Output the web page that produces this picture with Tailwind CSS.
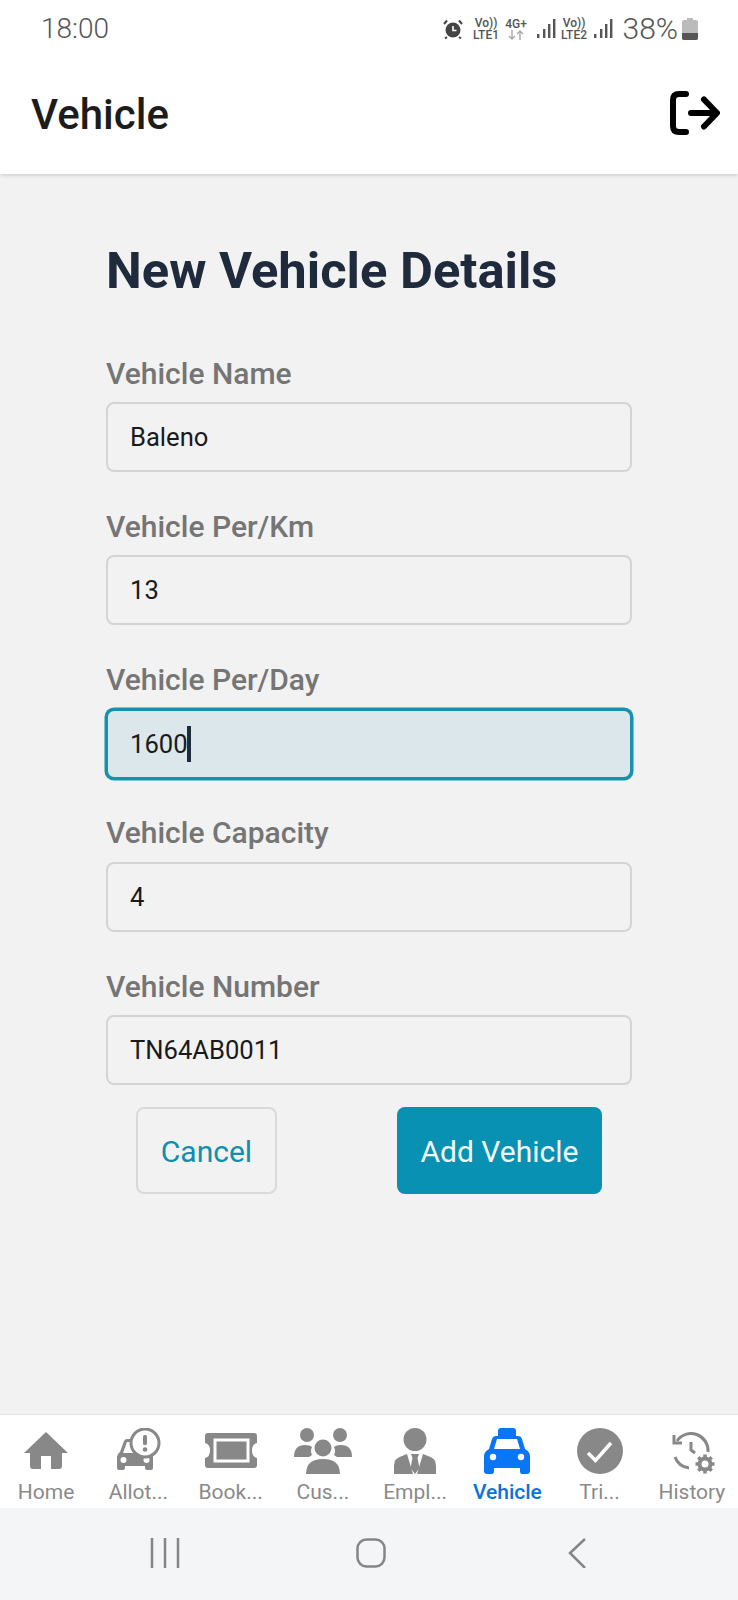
<!DOCTYPE html>
<html lang="en">

<head>
    <meta charset="UTF-8">
    <meta name="viewport" content="width=device-width, initial-scale=1.0">
    <title>Vehicle</title>
    <script src="https://cdn.jsdelivr.net/npm/@tailwindcss/browser@4"></script>
</head>

<body class="bg-[#f2f2f2] font-['Roboto',sans-serif]">
    <div class="flex flex-col h-[1600px] w-[738px] overflow-hidden">
        <!-- Status bar + title -->
        <header class="bg-white h-[174px] shrink-0 shadow-[0_1px_4px_rgba(0,0,0,0.18)] relative z-10">
            <div class="h-[57px] flex items-center justify-between pl-[41px] pr-[40px] text-[#555]">
                <span class="text-[28px] font-light">18:00</span>
                <div class="flex items-center">
                    <svg class="w-[20px] h-[20px]" viewBox="0 0 20 20" fill="#444">
                        <circle cx="10" cy="11" r="7.5" />
                        <path d="M1 5 4 1.5M19 5 16 1.5M4 18l-2 1.5M16 18l2 1.5" stroke="#444" stroke-width="2" />
                        <path d="M10 7v4.5h3.5" stroke="#fff" stroke-width="1.6" fill="none" />
                    </svg>
                    <div class="ml-[10px] w-[27px] flex flex-col items-center text-[12px] leading-[12px] font-medium">
                        <span>Vo))</span><span>LTE1</span>
                    </div>
                    <div class="ml-[5px] w-[23px] flex flex-col items-center text-[12px] leading-[12px] font-medium">
                        <span>4G+</span>
                        <svg class="w-[16px] h-[10px]" viewBox="0 0 16 10" fill="none" stroke="#aaa" stroke-width="1.4">
                            <path d="M4 0v9M1 6l3 3 3-3M12 10V1M9 4l3-3 3 3" />
                        </svg>
                    </div>
                    <svg class="ml-[9px] w-[19px] h-[20px]" viewBox="0 0 19 20" fill="#555">
                        <rect x="0" y="15" width="2.4" height="4" /><rect x="6" y="10" width="2.4" height="9" /><rect x="11" y="5" width="2.4" height="14" /><rect x="16" y="0" width="2.4" height="19" />
                    </svg>
                    <div class="ml-[5px] w-[27px] flex flex-col items-center text-[12px] leading-[12px] font-medium">
                        <span>Vo))</span><span>LTE2</span>
                    </div>
                    <svg class="ml-[6px] w-[19px] h-[20px]" viewBox="0 0 19 20" fill="#555">
                        <rect x="0" y="15" width="2.4" height="4" /><rect x="6" y="10" width="2.4" height="9" /><rect x="11" y="5" width="2.4" height="14" /><rect x="16" y="0" width="2.4" height="19" />
                    </svg>
                    <span class="ml-[10px] text-[30px] font-light">38%</span>
                    <svg class="ml-[4px] w-[16px] h-[22px]" viewBox="0 0 16 22">
                        <path d="M5 0h6v2h3q2 0 2 2v16q0 2-2 2H2q-2 0-2-2V4q0-2 2-2h3z" fill="#bbb" />
                        <path d="M0 15h16v5q0 2-2 2H2q-2 0-2-2z" fill="#555" />
                    </svg>
                </div>
            </div>
            <div class="flex items-center justify-between pl-[31px] pr-[18px] h-[112px]">
                <h2 class="text-[42px] font-medium text-[#1c1c1c] pt-[2px]">Vehicle</h2>
                <svg class="w-[50px] h-[44px]" viewBox="0 0 50 44" fill="none" stroke="#000" stroke-width="6" stroke-linecap="round" stroke-linejoin="round">
                    <path d="M16 3H9Q3 3 3 9v26q0 6 6 6h7" />
                    <path d="M21 22h25M34 8.500 47 22 34 35.500" />
                </svg>
            </div>
        </header>

        <!-- Form -->
        <main class="flex-1 px-[106px] pt-[65px]">
            <h1 class="text-[50.700px] leading-[64px] font-bold text-[#1f2a3c] mb-[54.500px]">New Vehicle Details</h1>

            <label class="block text-[30px] leading-[32px] font-medium text-[#757575] mb-[12.500px]">Vehicle Name</label>
            <input class="block w-[526px] h-[70px] px-[22px] rounded-lg border-2 border-[#d4d4d4] text-[25.600px] text-[#1a1a1a] mb-[38.800px]" value="Baleno">

            <label class="block text-[30px] leading-[32px] font-medium text-[#757575] mb-[12.500px]">Vehicle Per/Km</label>
            <input class="block w-[526px] h-[70px] px-[22px] rounded-lg border-2 border-[#d4d4d4] text-[25.600px] text-[#1a1a1a] mb-[38.800px]" value="13">

            <label class="block text-[30px] leading-[32px] font-medium text-[#757575] mb-[12.500px]">Vehicle Per/Day</label>
            <div class="relative mb-[38.800px]">
                <input class="block w-[526px] h-[70px] px-[22px] rounded-lg border-2 border-[#1592b0] ring-[1.500px] ring-[#1592b0] bg-[#dbe7ea] text-[25.600px] text-[#1a1a1a]" value="1600">
                <span class="absolute left-[81px] top-[17px] w-[4px] h-[36px] bg-[#1f2a3c]"></span>
            </div>

            <label class="block text-[30px] leading-[32px] font-medium text-[#757575] mb-[12.500px]">Vehicle Capacity</label>
            <input class="block w-[526px] h-[70px] px-[22px] rounded-lg border-2 border-[#d4d4d4] text-[25.600px] text-[#1a1a1a] mb-[38.800px]" value="4">

            <label class="block text-[30px] leading-[32px] font-medium text-[#757575] mb-[12.500px]">Vehicle Number</label>
            <input class="block w-[526px] h-[70px] px-[22px] rounded-lg border-2 border-[#d4d4d4] text-[25.600px] text-[#1a1a1a]" value="TN64AB0011">

            <div class="flex justify-between px-[30px] mt-[22px]">
                <button class="w-[141px] h-[87px] rounded-lg border-2 border-[#d9d9d9] text-[#0e8fae] text-[30px] pt-[1px]">Cancel</button>
                <button class="w-[205px] h-[87px] rounded-lg bg-[#0891b2] text-[#f2f9fb] text-[30px] pt-[1px]">Add Vehicle</button>
            </div>
        </main>

        <!-- Tabs -->
        <nav class="bg-white h-[94px] shrink-0 grid grid-cols-8 pt-[13px] border-t border-[#e4e4e4] text-[21px] text-[#8a8a8a] text-center">
            <a class="flex flex-col items-center">
                <svg class="w-[60px] h-[46px]" viewBox="0 0 60 46" fill="#888">
                    <path d="M30 4 8 25h6v13q0 3 3 3h8V28h10v13h8q3 0 3-3V25h6z" />
                </svg>
                <span class="leading-[30px] mt-[3px]">Home</span>
            </a>
            <a class="flex flex-col items-center">
                <svg class="w-[60px] h-[46px]" viewBox="0 0 60 46" fill="#888">
                    <path d="M9 29q0-3 3-5l4-11q1-2 3-2h16l6 13q4 2 4 5v11q0 2-2 2h-4q-2 0-2-2v-2H17v2q0 2-2 2h-4q-2 0-2-2z" />
                    <path d="M15 25l4-11h14l4 11z" fill="#fff" />
                    <circle cx="15.500" cy="32" r="3" fill="#fff" />
                    <circle cx="38.500" cy="32" r="3" fill="#fff" />
                    <circle cx="37" cy="15" r="14" fill="#fff" stroke="#888" stroke-width="3" />
                    <rect x="35" y="7" width="4" height="10" rx="1.500" />
                    <circle cx="37" cy="21.500" r="2.300" />
                </svg>
                <span class="leading-[30px] mt-[3px]">Allot...</span>
            </a>
            <a class="flex flex-col items-center">
                <svg class="w-[60px] h-[46px]" viewBox="0 0 60 46" fill="#888">
                    <path d="M7 5h46q3 0 3 3v7q-5 1-5 7.500t5 7.500v7q0 3-3 3H7q-3 0-3-3v-7q5-1 5-7.500T4 15V8q0-3 3-3z" />
                    <rect x="14" y="12" width="33" height="21" fill="none" stroke="#fff" stroke-width="3" />
                </svg>
                <span class="leading-[30px] mt-[3px]">Book...</span>
            </a>
            <a class="flex flex-col items-center">
                <svg class="w-[60px] h-[46px]" viewBox="0 0 60 46" fill="#888">
                    <circle cx="14" cy="7" r="7" /><circle cx="47" cy="7" r="7" />
                    <path d="M1 29q0-12 11-12 5 0 7 2-2 4 0 8l-3 2z" />
                    <path d="M59 29q0-12-11-12-5 0-7 2 2 4 0 8l3 2z" />
                    <circle cx="30" cy="20" r="8.500" />
                    <path d="M13 46q0-15 17-15t17 15z" />
                </svg>
                <span class="leading-[30px] mt-[3px]">Cus...</span>
            </a>
            <a class="flex flex-col items-center">
                <svg class="w-[60px] h-[46px]" viewBox="0 0 60 46" fill="#888">
                    <circle cx="30" cy="11.500" r="11.500" />
                    <path d="M9 46V38q0-8 8-10l5-2 6 20h4l6-20 5 2q8 2 8 10v8z" />
                    <path d="M26 26h8l-1.500 4h-5z" />
                    <path d="M27.500 30h5l2 10-4.500 6-4.500-6z" />
                </svg>
                <span class="leading-[30px] mt-[3px]">Empl...</span>
            </a>
            <a class="flex flex-col items-center">
                <svg class="w-[60px] h-[46px]" viewBox="0 0 60 46" fill="#0a76f6">
                    <path d="M21 8V3q0-3 3-3h12q3 0 3 3v5h2q3 0 4 3l3 10q5 3 5 7v15q0 3-3 3h-5q-2 0-2-3v-3H17v3q0 3-2 3h-5q-3 0-3-3V28q0-4 5-7l3-10q1-3 4-3z" />
                    <path d="M20 11h20l3 10H17z" fill="#fff" />
                    <circle cx="16" cy="29" r="3.200" fill="#fff" />
                    <circle cx="44" cy="29" r="3.200" fill="#fff" />
                </svg>
                <span class="leading-[30px] mt-[3px] font-medium text-[#0b72d9]">Vehicle</span>
            </a>
            <a class="flex flex-col items-center">
                <svg class="w-[60px] h-[46px]" viewBox="0 0 60 46">
                    <circle cx="30" cy="23" r="23" fill="#888" />
                    <path d="M18 25l7.500 7.500L41 15" fill="none" stroke="#fff" stroke-width="3.500" />
                </svg>
                <span class="leading-[30px] mt-[3px]">Tri...</span>
            </a>
            <a class="flex flex-col items-center">
                <svg class="w-[60px] h-[46px]" viewBox="0 0 60 46" fill="none" stroke="#888" stroke-width="3">
                    <path d="M15 13a17 17 0 0 1 31 11" />
                    <path d="M13 29a17 17 0 0 0 14 11" />
                    <path d="M12 7v8h8" />
                    <path d="M29 14v8l4 3" />
                    <circle cx="43" cy="36" r="5.500" stroke-width="4" />
                    <path d="M43 26.500v4M43 41.500v4M33.500 36h4M48.500 36h4M36.300 29.300l2.800 2.800M46.900 39.900l2.800 2.800M36.300 42.700l2.800-2.800M46.900 32.100l2.800-2.800" stroke-width="3.500" />
                </svg>
                <span class="leading-[30px] mt-[3px]">History</span>
            </a>
        </nav>

        <!-- Android nav -->
        <div class="bg-[#f4f5f7] h-[92px] shrink-0 grid grid-cols-3 pl-[62px] pr-[58px] items-center justify-items-center pb-[2px]">
            <svg class="w-[30px] h-[30px]" viewBox="0 0 30 30" stroke="#858585" stroke-width="2.500">
                <path d="M2 0v30M15 0v30M28 0v30" />
            </svg>
            <svg class="w-[30px] h-[30px]" viewBox="0 0 30 30" fill="none" stroke="#858585" stroke-width="2.500">
                <rect x="1.500" y="1.500" width="27" height="27" rx="9" />
            </svg>
            <svg class="w-[18px] h-[30px]" viewBox="0 0 18 30" fill="none" stroke="#858585" stroke-width="2.500">
                <path d="M17 1 2 15l15 15" />
            </svg>
        </div>
    </div>
</body>

</html>
